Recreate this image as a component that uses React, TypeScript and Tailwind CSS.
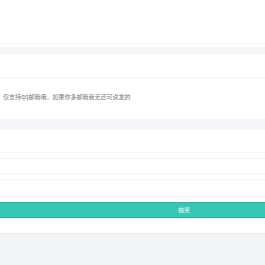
import React from "react";

const App: React.FC = () => {
  return (
    <div className="flex h-[265px] w-[265px] flex-col overflow-hidden bg-white font-['Noto_Sans_CJK_SC',sans-serif]">
      {/* header */}
      <div className="h-[44px] border-b border-[#f4f4f6] bg-white" />
      <div className="h-[3px] bg-white" />
      <div className="h-[7px] bg-[#f5f6fa]" />
      <div className="h-[24px] border-b border-[#f4f4f6] bg-white" />

      {/* tip */}
      <div className="flex h-[41px] items-center px-[3px] pb-[4px] text-[6px] leading-none text-[#7a7a7a]">
        仅支持qq邮箱哦，如果你多邮箱我无还可说发的
      </div>
      <div className="h-[11px] bg-[#f5f6fa]" />

      {/* form rows */}
      <div className="h-[23px] border-b border-[#f4f4f6]" />
      <div className="h-[6px] border-b border-[#f6f6f8]" />
      <div className="h-[15px] border-b border-[#f4f4f6]" />
      <div className="h-[6px] border-b border-[#f6f6f8]" />
      <div className="h-[17px] border-b border-[#fbf1f1]" />
      <div className="h-[5px]" />

      {/* button */}
      <button className="flex h-[16px] w-full items-center justify-end border-y border-[#2fb3a4] bg-[#37c7b7] pr-[75px] text-[6px] leading-none text-[#e9fbf8]">
        抽奖
      </button>
      <div className="h-[1px] bg-[#d9f5f2]" />
      <div className="h-[15px] border-b border-[#ececef] bg-white" />
      <div className="flex-1 bg-[#f4f5f8]" />
    </div>
  );
};

export default App;
